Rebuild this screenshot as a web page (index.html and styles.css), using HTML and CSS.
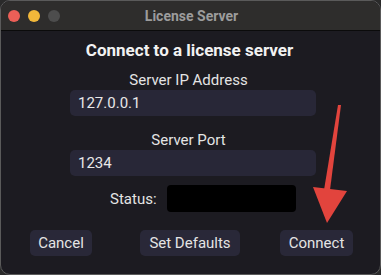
FILE: index.html
```html
<!DOCTYPE html>
<html lang="en">
<head>
    <meta charset="UTF-8">
    <title>License Server</title>
    <link rel="stylesheet" href="styles.css">
</head>
<body>
    <div class="window">
        <!-- Barra de titulo -->
        <div class="titlebar">
            <div class="lights">
                <span class="light red"></span>
                <span class="light yellow"></span>
                <span class="light gray"></span>
            </div>
            <div class="title">License Server</div>
        </div>

        <div class="content">
            <h1>Connect to a license server</h1>

            <div class="label">Server IP Address</div>
            <div class="field">127.0.0.1</div>

            <div class="label label-port">Server Port</div>
            <div class="field">1234</div>

            <div class="status-row">
                <span class="status-label">Status:</span>
                <span class="status-box"></span>
            </div>

            <div class="buttons">
                <button class="btn btn-cancel">Cancel</button>
                <button class="btn btn-defaults">Set Defaults</button>
                <button class="btn btn-connect">Connect</button>
            </div>
        </div>

        <!-- Flecha de anotacion -->
        <svg class="arrow" width="381" height="275" viewBox="0 0 381 275">
            <polygon points="338,105 341,105 330,190 324,190" fill="#e2443d"/>
            <polygon points="313,187 347,191 327,223" fill="#e2443d"/>
        </svg>
    </div>
</body>
</html>
```

FILE: styles.css
```css
body {
    margin: 0;
    background-color: #2a2a2a;
    font-family: Roboto, "Liberation Sans", sans-serif;
}

.window {
    position: relative;
    width: 381px;
    height: 275px;
    box-sizing: border-box;
    border: 1px solid #5a5a5a;
    border-radius: 10px;
    background-color: #1c1b21;
    overflow: hidden;
}

.titlebar {
    position: relative;
    height: 29px;
    background-color: #2e2d2c;
    border-bottom: 1px solid #0b0b0b;
    display: flex;
    align-items: center;
    justify-content: center;
}

.lights {
    position: absolute;
    left: 7px;
    top: 9px;
    display: flex;
    gap: 8px;
}

.light {
    width: 12px;
    height: 12px;
    border-radius: 50%;
}

.red { background-color: #ec5f57; }
.yellow { background-color: #f2b83a; }
.gray { background-color: #4d4d4d; }

.title {
    color: #9c9c9c;
    font-size: 14px;
    font-weight: bold;
    margin-left: 2px;
}

.content {
    display: flex;
    flex-direction: column;
    align-items: center;
}

h1 {
    margin: 9px 0 0 -2px;
    font-size: 17px;
    line-height: 21px;
    color: #f2f2f2;
    font-weight: bold;
}

.label {
    margin-top: 10px;
    font-size: 15px;
    line-height: 18px;
    color: #e4e4e4;
    margin-left: -4px;
}

.label-port {
    margin-top: 15px;
}

.field {
    align-self: flex-start;
    margin-left: 69px;
    margin-top: 1px;
    width: 246px;
    height: 26px;
    box-sizing: border-box;
    padding-left: 8px;
    border-radius: 5px;
    background-color: #282737;
    color: #e8e8e8;
    font-size: 15px;
    line-height: 26px;
}

.status-row {
    align-self: flex-start;
    display: flex;
    align-items: center;
    margin-left: 109px;
    margin-top: 9px;
}

.status-label {
    color: #e4e4e4;
    font-size: 15px;
    width: 57px;
}

.status-box {
    width: 129px;
    height: 27px;
    border-radius: 4px;
    background-color: #000;
}

.buttons {
    align-self: flex-start;
    display: flex;
    margin-top: 18px;
}

.btn {
    height: 26px;
    border: none;
    border-radius: 5px;
    background-color: #292838;
    color: #e4e4e4;
    font-family: Roboto, "Liberation Sans", sans-serif;
    font-size: 15px;
    padding: 0;
}

.btn-cancel {
    width: 62px;
    margin-left: 29px;
}

.btn-defaults {
    width: 100px;
    margin-left: 48px;
}

.btn-connect {
    width: 73px;
    margin-left: 40px;
}

.arrow {
    position: absolute;
    left: -1px;
    top: -1px;
    pointer-events: none;
}
```
